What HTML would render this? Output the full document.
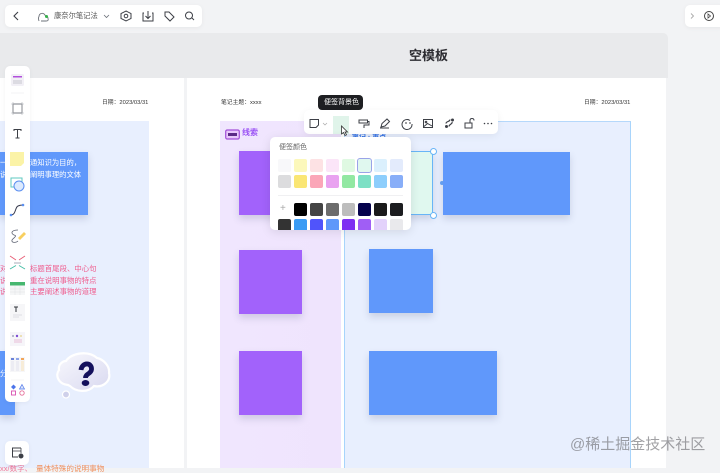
<!DOCTYPE html>
<html lang="zh"><head><meta charset="utf-8">
<style>
html,body{margin:0;padding:0}
body{width:720px;height:468px;position:relative;overflow:hidden;background:#f2f3f5;font-family:"Liberation Sans","Noto Sans CJK SC",sans-serif}
.a{position:absolute}
.t{position:absolute;white-space:nowrap;line-height:1}
.card{position:absolute;background:#fff;border-radius:5px;box-shadow:0 1px 5px rgba(0,0,0,.05)}
.s{position:absolute;box-shadow:0 4px 7px rgba(60,70,110,.18)}
.b{background:#6098fb}.p{background:#a262fb}
svg{position:absolute;overflow:visible}
.sw{position:absolute;width:13px;height:13px;border-radius:2px}
</style></head><body>
<div class="a" style="left:0;top:33px;width:668px;height:45px;background:#e9eaec;border-radius:0 5px 0 0"></div>
<div class="a" style="left:0;top:78px;width:184px;height:390px;background:#fff"></div>
<div class="a" style="left:187px;top:78px;width:479px;height:390px;background:#fff"></div>
<div class="t" style="left:409px;top:49px;font-size:13px;font-weight:bold;color:#2b2b30">空模板</div>
<div class="t" style="left:102px;top:101px;font-size:5.800px;color:#333">日期：2023/03/31</div>
<div class="t" style="left:221px;top:101px;font-size:5.800px;color:#333">笔记主题：xxxx</div>
<div class="t" style="left:584px;top:101px;font-size:5.800px;color:#333">日期：2023/03/31</div>

<div class="a" style="left:0;top:121px;width:149px;height:347px;background:#e8effe"></div>
<div class="s b" style="left:0;top:152px;width:88px;height:63px"></div>
<div class="t" style="left:30px;top:157px;font-size:7.300px;line-height:11.500px;color:#fff;white-space:pre">通知识为目的，
阐明事理的文体</div>
<div class="t" style="left:30px;top:263px;font-size:7.400px;line-height:11.700px;color:#ef5d8e;white-space:pre">标题首尾段、中心句
重在说明事物的特点
主要阐述事物的道理</div>
<div class="t" style="left:0;top:263px;font-size:7.400px;line-height:11.700px;color:#ef5d8e;white-space:pre">对
说
说</div>
<div class="t" style="left:0;top:157px;font-size:7.300px;line-height:11.500px;color:#fff;white-space:pre">一
说</div>
<div class="s b" style="left:0;top:351px;width:15px;height:64px"></div>
<div class="t" style="left:0;top:370px;font-size:7.300px;color:#fff">分</div>
<div class="t" style="left:0;top:465px;font-size:7.500px;color:#f0789a">xx/数字、</div>
<div class="t" style="left:36px;top:465px;font-size:7.600px;color:#f0905d">量体特殊的说明事物</div>

<svg style="left:50px;top:345px" width="70" height="60" viewBox="50 345 70 60">
<defs><linearGradient id="c" x1="0" y1="0" x2="1" y2="1"><stop offset="0" stop-color="#f8f8fd"/><stop offset="1" stop-color="#d9d9f0"/></linearGradient></defs>
<path d="M68 385C58 384 55 375 59 370C58 364 63 361 66 361C71 353 88 350 97 358C103 359 110 366 109 373C111 381 103 388 94 386C88 393 76 392 70 386Z" fill="url(#c)" stroke="#fff" stroke-width="2.200"/>
<circle cx="66" cy="394.500" r="3.500" fill="#cfd0ea" stroke="#fff" stroke-width="1.200"/>
<path d="M81 370C82 362 92 362 91.500 369.500C91 374 85.500 373.500 85.500 378" fill="none" stroke="#14105c" stroke-width="4.800"/>
<ellipse cx="85.500" cy="383" rx="3.800" ry="3" fill="#14105c"/>
</svg>

<div class="a" style="left:220px;top:121px;width:121px;height:347px;background:linear-gradient(90deg,#f0e6fe,#efe4fd)"></div>
<div class="a" style="left:344px;top:121px;width:287px;height:347px;background:#e8effe;border-top:1px solid #b5d8fb;border-right:1px solid #a8d4fb;border-left:1px solid #a8d4fb;box-sizing:border-box"></div>
<svg style="left:225px;top:128px" width="15" height="12" viewBox="0 0 15 12"><rect x=".7" y="2" width="13.600" height="9" rx="1.500" fill="#e8c7fb" stroke="#a24fd8" stroke-width="1.200"/><rect x="3" y="5" width="9" height="3" fill="#5b2a86"/></svg>
<div class="t" style="left:242px;top:129px;font-size:8px;color:#9a52f5;font-weight:bold">线索</div>
<div class="t" style="left:352px;top:134px;font-size:7px;color:#2e6fe8;font-weight:bold">笔记 · 重点</div>

<div class="s p" style="left:239px;top:151px;width:63px;height:64px"></div>
<div class="s p" style="left:239px;top:250px;width:63px;height:64px"></div>
<div class="s p" style="left:239px;top:351px;width:63px;height:64px"></div>
<div class="s" style="left:369px;top:151px;width:64px;height:64px;background:#e0f8ef;border:1px solid #68b5f7;box-sizing:border-box"></div>
<div class="a" style="left:430px;top:148px;width:7px;height:7px;border-radius:50%;background:#fff;border:1px solid #68b5f7;box-sizing:border-box"></div>
<div class="a" style="left:430px;top:212px;width:7px;height:7px;border-radius:50%;background:#fff;border:1px solid #68b5f7;box-sizing:border-box"></div>
<div class="a" style="left:440px;top:181px;width:4px;height:4px;border-radius:50%;background:#68a5f7"></div>
<div class="s b" style="left:443px;top:152px;width:127px;height:63px"></div>
<div class="s b" style="left:369px;top:249px;width:64px;height:64px"></div>
<div class="s b" style="left:369px;top:351px;width:128px;height:64px"></div>

<!-- top toolbar -->
<div class="card" style="left:5px;top:5px;width:197px;height:22px"></div>
<svg style="left:5px;top:5px" width="197" height="22" viewBox="0 0 197 22" fill="none" stroke="#3c3f46" stroke-width="1">
<path d="M13 7L9 11L13 15" stroke-width="1.100"/>
<path d="M36 16H41Q44 16 43 13.500Q43 11 40.500 11Q39 7.500 36 8.500Q34 9.500 34 11.500Q33 13 34 16" stroke="#6b7078" stroke-width=".9"/>
<path d="M121 6L126 8.500V13.500L121 16L116 13.500V8.500Z"/><circle cx="121" cy="11" r="1.800"/>
<path d="M139 8H138V16H148V8H147M143 6V13M140.500 11L143 13.500L145.500 11"/>
<path d="M160 7H164L169 12L165 16L160 11Z"/>
<circle cx="184" cy="10.500" r="3.500"/><path d="M187 13L189 15"/>
<path d="M99 10L101.500 12.500L104 10" stroke="#6b7078" stroke-width=".8"/>
</svg>
<div class="a" style="left:45px;top:15px;width:3px;height:3px;border-radius:50%;background:#35b34a"></div>
<div class="t" style="left:54px;top:12px;font-size:7.300px;color:#555">康奈尔笔记法</div>

<div class="card" style="left:685px;top:5px;width:40px;height:22px"></div>
<svg style="left:685px;top:5px" width="35" height="22" viewBox="0 0 35 22" fill="none" stroke="#444">
<path d="M6 8.500L8.500 11L6 13.500" stroke="#aaa" stroke-width=".9"/>
<circle cx="24" cy="11" r="4.500" stroke-width="1"/><path d="M23 9V13L25.500 11Z" stroke-width=".8"/>
</svg>

<!-- left toolbar -->
<div class="card" style="left:5px;top:66px;width:25px;height:336px"></div>
<svg style="left:5px;top:66px" width="25" height="336" viewBox="0 0 25 336" fill="none">
<rect x="6" y="8" width="13" height="12" rx="1.500" fill="#f2f0f6"/><rect x="8" y="10" width="9" height="1.500" fill="#b24fdc"/><rect x="8" y="14" width="9" height="4" fill="#dcdbe2"/>
<path d="M6 27H19" stroke="#f0f0f2" stroke-width=".8"/>
<rect x="8" y="38" width="9" height="9" stroke="#44474e" stroke-width="1"/><path d="M6 38H19M6 47H19M8 36V49M17 36V49" stroke="#b0b3ba" stroke-width=".6"/>
<path d="M9 65V63.500H16V65M12.500 63.500V72M10.500 72H14.500" stroke="#3c3f46" stroke-width="1"/>
<path d="M5 86H19V97L16 100H5Z" fill="#fbf3a7"/>
<rect x="6" y="112" width="11" height="9" fill="#fff" stroke="#5ec8c0" stroke-width="1"/><circle cx="14" cy="120" r="5" fill="#dceafe" stroke="#5b8ff0" stroke-width="1"/>
<path d="M6 149C11 149 10 141 13 140C15 139 17 139 18 139" stroke="#33364a" stroke-width="1"/><circle cx="6" cy="149" r="1.300" fill="#5b8ff0"/><circle cx="18" cy="139" r="1.300" fill="#5b8ff0"/>
<path d="M13 164C7 164 5 167 9 169C13 170 8 172 7 174C6 177 11 177 13 175" stroke="#5c6170" stroke-width=".8"/><path d="M13 172L19 166L21 168L15 174Z" fill="#f8cf5f"/>
<path d="M5 190L11 194M20 190L14 194" stroke="#e85d75" stroke-width=".9"/><path d="M5 203L11 199.500M20 203L14 199.500" stroke="#43bda5" stroke-width=".9"/><path d="M9 197H16" stroke="#c5c8d0" stroke-width="1.500"/>
<rect x="5" y="216" width="15" height="13" fill="#f5f6f7"/><rect x="5" y="216" width="15" height="3.500" fill="#46b76f"/><path d="M5 223H20M5 226H20M10 220V229M15 220V229" stroke="#dfe2e5" stroke-width=".5"/>
<rect x="5" y="238" width="15" height="17" fill="#f6f6f8"/><path d="M9 241H13M11 241V246" stroke="#33363c" stroke-width="1"/><path d="M8 249H17M8 251H14" stroke="#d5d7dc" stroke-width=".8"/>
<rect x="5" y="266" width="15" height="14" fill="#f6f5f9"/><circle cx="8" cy="270" r="1" fill="#a1a5c0"/><circle cx="12" cy="270" r="1.200" fill="#7c4bd4"/><circle cx="16" cy="270" r="1" fill="#e9d9a0"/><rect x="9" y="273" width="8" height="4" fill="#efd9e8"/>
<rect x="5" y="291" width="15" height="15" fill="#f6f6f8"/><rect x="6" y="292" width="3" height="2" fill="#6b83d8"/><rect x="11" y="292" width="3" height="2" fill="#8da4e8"/><rect x="16" y="292" width="3" height="2" fill="#f2a65a"/><rect x="6" y="295" width="3" height="10" fill="#ececf3"/><rect x="11" y="295" width="3" height="10" fill="#ececf3"/><rect x="16" y="295" width="3" height="10" fill="#f7ecd8"/>
<path d="M6 314H19" stroke="#f2f2f4" stroke-width=".8"/>
<path d="M8.500 318.500L11 321L8.500 323.500L6 321Z" fill="#4d75ea"/><path d="M17 318.500L19.500 323H14.500Z" fill="#dce6fb" stroke="#4d75ea" stroke-width=".7"/><rect x="6.500" y="325" width="4" height="4" stroke="#d94fb0" stroke-width=".9"/><circle cx="17" cy="327" r="2.200" stroke="#e6709a" stroke-width=".9"/>
</svg>
<div class="card" style="left:5px;top:441px;width:24px;height:24px"></div>
<svg style="left:5px;top:441px" width="24" height="24" viewBox="0 0 24 24" fill="none" stroke="#3c3f46"><path d="M16 7H7.500V16H13" stroke-width="1"/><path d="M16 7V12M7.500 10H16" stroke-width=".8"/><circle cx="16" cy="15" r="2" fill="#3c3f46"/></svg>

<!-- tooltip -->
<div class="a" style="left:318px;top:95px;width:45px;height:15px;background:#1e1f22;border-radius:4px"></div>
<div class="a" style="left:337px;top:109px;width:0;height:0;border:3px solid transparent;border-top-color:#1e1f22"></div>
<div class="t" style="left:324px;top:99px;font-size:7px;color:#fff">便签背景色</div>

<!-- context toolbar -->
<div class="card" style="left:304px;top:110px;width:194px;height:24px;box-shadow:0 2px 8px rgba(0,0,0,.06)"></div>
<div class="a" style="left:333px;top:116px;width:16px;height:18px;background:#e0f4ea"></div>
<svg style="left:304px;top:110px" width="194" height="24" viewBox="0 0 194 24" fill="none" stroke="#3c3f46" stroke-width="1">
<path d="M6 9.500H14.500V15L12 17.500H6Z"/>
<path d="M19 13L21 15L23 13" stroke="#aaa" stroke-width=".7"/>
<path d="M55 10H63.500V13H55ZM63.500 11.500H65V15H60V18"/>
<path d="M77 17L78 13.500L83 9L85.500 11.500L81 16L77 17ZM76 18H85"/>
<path d="M106 10.500A5 5 0 1 0 108 14M101 13H103M105 13H107M104 10V9"/>
<rect x="119.500" y="9.500" width="9" height="8"/><circle cx="122" cy="12" r=".8"/><path d="M120 16.500L123.500 13.500L128 16"/>
<path d="M146 9.500C146 12 142 11 142 13.500M148 12C149 14 145 14 145 16.500" stroke-width="1.200"/><circle cx="148.500" cy="10" r="1" fill="#3c3f46"/><circle cx="142.500" cy="16.500" r="1" fill="#3c3f46"/>
<rect x="161" y="13" width="7" height="5"/><path d="M166 13V10.500Q166 8.500 168 8.500Q170 8.500 170 10.500"/>
<circle cx="180.500" cy="13.500" r=".8" fill="#3c3f46" stroke="none"/><circle cx="184" cy="13.500" r=".8" fill="#3c3f46" stroke="none"/><circle cx="187.500" cy="13.500" r=".8" fill="#3c3f46" stroke="none"/>
</svg>
<svg style="left:340px;top:125px" width="9" height="12" viewBox="0 0 9 12"><path d="M1.500 1V9L3.500 7.500L5 10.500L6.500 9.800L5 7H7.500Z" fill="#fff" stroke="#333" stroke-width=".8"/></svg>

<!-- colour popup -->
<div class="a" style="left:270px;top:137px;width:141px;height:93px;background:#fff;border-radius:5px;box-shadow:0 2px 10px rgba(0,0,0,.1)"></div>
<div class="t" style="left:279px;top:144px;font-size:7px;color:#666">便签颜色</div>
<div class="sw" style="left:278px;top:159px;background:#f8f8fa"></div>
<div class="sw" style="left:294px;top:159px;background:#fcf8bb"></div>
<div class="sw" style="left:310px;top:159px;background:#fde2e4"></div>
<div class="sw" style="left:326px;top:159px;background:#fbe5f8"></div>
<div class="sw" style="left:342px;top:159px;background:#dff9e2"></div>
<div class="sw" style="left:358px;top:159px;background:#e0f8ef;outline:1px solid #9aa3e8"></div>
<div class="sw" style="left:374px;top:159px;background:#dbf0fd"></div>
<div class="sw" style="left:390px;top:159px;background:#e3ebfc"></div>
<div class="sw" style="left:278px;top:175px;background:#dcdcde"></div>
<div class="sw" style="left:294px;top:175px;background:#fae674"></div>
<div class="sw" style="left:310px;top:175px;background:#fba6b8"></div>
<div class="sw" style="left:326px;top:175px;background:#e9a2f0"></div>
<div class="sw" style="left:342px;top:175px;background:#92e8a2"></div>
<div class="sw" style="left:358px;top:175px;background:#7de0c5"></div>
<div class="sw" style="left:374px;top:175px;background:#8dcefc"></div>
<div class="sw" style="left:390px;top:175px;background:#88aef8"></div>
<div class="a" style="left:278px;top:195px;width:125px;height:1px;background:#f0f0f2"></div>
<div class="t" style="left:280px;top:204px;font-size:10px;color:#aaa">+</div>
<div class="sw" style="left:294px;top:203px;background:#000"></div>
<div class="sw" style="left:310px;top:203px;background:#444"></div>
<div class="sw" style="left:326px;top:203px;background:#6c6c6c"></div>
<div class="sw" style="left:342px;top:203px;background:#bdbdbd"></div>
<div class="sw" style="left:358px;top:203px;background:#05024c"></div>
<div class="sw" style="left:374px;top:203px;background:#1a1a1a"></div>
<div class="sw" style="left:390px;top:203px;background:#1c1d20"></div>
<div class="a" style="left:270px;top:219px;width:141px;height:11px;overflow:hidden">
<div class="sw" style="left:8px;top:0;background:#333"></div>
<div class="sw" style="left:24px;top:0;background:#3a9bf4"></div>
<div class="sw" style="left:40px;top:0;background:#5054fb"></div>
<div class="sw" style="left:56px;top:0;background:#5f98fa"></div>
<div class="sw" style="left:72px;top:0;background:#7e30f2"></div>
<div class="sw" style="left:88px;top:0;background:#a05ef5"></div>
<div class="sw" style="left:104px;top:0;background:#e3d2fb"></div>
<div class="sw" style="left:120px;top:0;background:#e9e9ec"></div>
</div>

<div class="t" style="left:570px;top:437px;font-size:15px;color:rgba(110,110,115,.65)">@稀土掘金技术社区</div>
</body></html>
